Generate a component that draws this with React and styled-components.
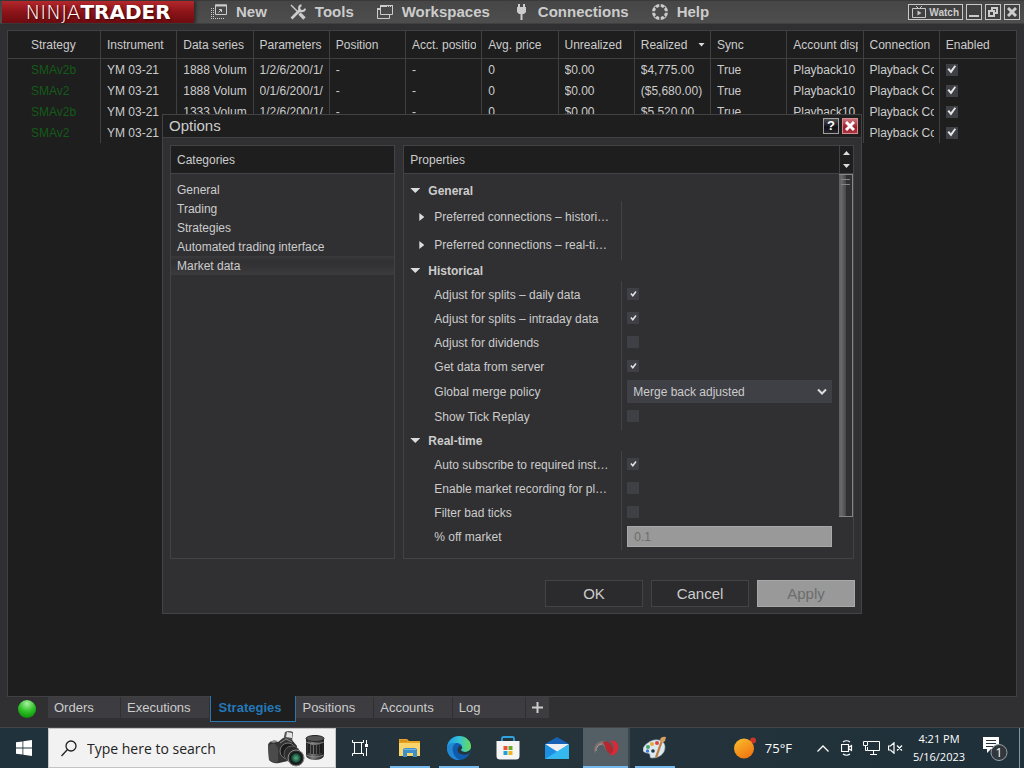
import React from 'react';
import styled, { createGlobalStyle, css } from 'styled-components';

const GlobalStyle = createGlobalStyle`
  * {
    box-sizing: border-box;
  }

  body {
    margin: 0;
    background: #303032;
    color: #cccccc;
    font-family: 'Liberation Sans', Arial, sans-serif;
    font-size: 12px;
  }

  button, input, select {
    font-family: inherit;
    font-size: inherit;
    color: inherit;
  }
`;

const Screen = styled.div`
  position: relative;
  display: flex;
  flex-direction: column;
  height: 100vh;
  overflow: hidden;
`;

/* ---------- title bar ---------- */

const TitleBar = styled.header`
  display: flex;
  align-items: center;
  height: 24px;
  padding-left: 2px;
  padding-right: 4px;
  background: linear-gradient(#464646, #4e4e4e);
  border-top: 1px solid #3a3a3a;
  border-bottom: 1px solid #404041;
`;

const Brand = styled.div`
  width: 192px;
  height: 22px;
  background: linear-gradient(#b3282d, #8c1418 50%, #6d0c10);
  box-shadow: 2px 0 3px #2a2a2a;
  color: #ffffff;
  font-family: 'DejaVu Sans', sans-serif;
  font-size: 20px;
  font-weight: 200;
  line-height: 22px;
  text-align: center;
  text-shadow: 1px 1px 2px #3c0508;
  white-space: nowrap;

  b {
    font-weight: 700;
  }
`;

const Menu = styled.nav`
  display: flex;
  gap: 23px;
  margin-left: 17px;
`;

const MenuButton = styled.button`
  display: flex;
  align-items: center;
  gap: 9px;
  padding: 0;
  border: 0;
  background: none;
  font-size: 15px;
  font-weight: bold;
  line-height: 22px;
`;

const WindowControls = styled.div`
  display: flex;
  gap: 3px;
  margin-left: auto;
`;

const FrameButton = styled.button`
  display: flex;
  align-items: center;
  justify-content: center;
  gap: 3px;
  min-width: 16px;
  height: 16px;
  padding: 0 ${({ $wide }) => ($wide ? '3px' : '0')};
  border: 1px solid #c8c8c8;
  background: #404040;
  font-size: 10px;
  font-weight: bold;
`;

/* ---------- strategies grid ---------- */

const GridPanel = styled.main`
  flex: 1;
  min-height: 0;
  margin: 6px 7px 0;
  border: 1px solid #404041;
  background: #1e1e1e;
`;

const Grid = styled.table`
  width: 100%;
  table-layout: fixed;
  border-spacing: 0;
`;

const cell = css`
  padding: 0 5px 0 6px;
  border-right: 1px solid #404041;
  text-align: left;
  font-weight: normal;

  &:first-child {
    width: 93px;
    padding-left: 23px;
  }

  &:last-child {
    border-right: 0;
  }
`;

const HeadCell = styled.th`
  ${cell}
  height: 28px;
  border-bottom: 1px solid #404041;
`;

const BodyCell = styled.td`
  ${cell}
  height: 21px;
  color: ${({ $green }) => ($green ? '#145a18' : '#cccccc')};
`;

const CellText = styled.div`
  display: flex;
  align-items: center;
  justify-content: space-between;
  overflow: hidden;
  white-space: nowrap;
`;

const CheckBox = styled.input.attrs({ type: 'checkbox' })`
  appearance: none;
  display: block;
  width: 12px;
  height: 12px;
  margin: 0;
  background: #3f3f46;

  &:checked::after {
    content: '';
    display: block;
    width: 12px;
    height: 12px;
    background: #e4e4e4;
    clip-path: ${({ $small }) =>
      $small
        ? 'polygon(25% 50%, 36% 42%, 44% 54%, 68% 25%, 77% 34%, 46% 75%)'
        : 'polygon(14% 48%, 28% 38%, 42% 56%, 74% 14%, 86% 22%, 44% 84%)'};
  }
`;

/* ---------- tabs ---------- */

const TabBar = styled.div`
  display: flex;
  align-items: flex-start;
  height: 31px;
  padding: 0 18px;
  border-bottom: 1px solid #454547;
`;

const StatusLight = styled.span`
  width: 18px;
  height: 18px;
  margin: 3px 12px 0 0;
  border-radius: 50%;
  background: radial-gradient(circle at 50% 20%, #a8f0a0, #33c42c 45%, #14a010 75%, #0b6e0b);
`;

const Tab = styled.button`
  min-width: ${({ $add }) => ($add ? '23px' : '72px')};
  height: 21px;
  margin-right: 1px;
  padding: 0 ${({ $add }) => ($add ? '0' : '18px 0 6px')};
  border: 0;
  background: #3c3c41;
  font-size: 13px;
  line-height: 21px;
  text-align: ${({ $add }) => ($add ? 'center' : 'left')};

  svg {
    display: block;
    margin: auto;
  }

  ${({ $active }) =>
    $active &&
    css`
      height: 26px;
      margin-top: -1px;
      margin-right: 0;
      padding: 0 14px 3px 8px;
      border: 1px solid #2b77b0;
      border-top: 0;
      background: #1e1e1e;
      color: #2478b8;
      font-weight: bold;
    `}
`;

/* ---------- options dialog ---------- */

const DialogLayer = styled.div`
  position: absolute;
  inset: 0;
  display: flex;
  align-items: flex-start;
  justify-content: center;
  padding-top: 114px;
  pointer-events: none;
`;

const Dialog = styled.section`
  width: 700px;
  border: 1px solid #434346;
  background: #303032;
  pointer-events: auto;
`;

const DialogTitle = styled.div`
  display: flex;
  align-items: center;
  gap: 3px;
  height: 23px;
  padding: 0 3px 0 6px;
  border-bottom: 1px solid #404041;
  background: #1e1e1e;

  h1 {
    flex: 1;
    margin: 0;
    font-size: 15px;
    font-weight: normal;
    line-height: 20px;
  }
`;

const CaptionButton = styled.button`
  display: flex;
  align-items: center;
  justify-content: center;
  width: 16px;
  height: 16px;
  padding: 0;
  border: 1px solid ${({ $danger }) => ($danger ? '#d98a90' : '#a0a0a0')};
  background: ${({ $danger }) =>
    $danger ? 'linear-gradient(#c9727a, #9c1f2b 60%, #a83540)' : 'linear-gradient(#4c4c50, #101018 60%, #26262a)'};
  color: #ffffff;
  font-size: 13px;
  font-weight: bold;
  line-height: 14px;
`;

const Panels = styled.div`
  display: grid;
  grid-template-columns: 1fr 2fr;
  gap: 8px;
  padding: 7px;
`;

const Panel = styled.div`
  display: flex;
  flex-direction: column;
  min-width: 0;
  border: 1px solid #434346;
`;

const PanelHead = styled.div`
  display: flex;
  align-items: center;
  justify-content: space-between;
  height: 28px;
  padding-left: 6px;
  border-bottom: 1px solid #434346;
  background: #1e1e1e;

  h2 {
    margin: 0;
    font-size: 12px;
    font-weight: normal;
  }
`;

const Categories = styled.div`
  display: flex;
  flex-direction: column;
  padding-top: 6px;
`;

const Category = styled.button`
  height: 19px;
  padding: 0 6px;
  border: 0;
  background: ${({ $selected }) => ($selected ? 'linear-gradient(#39393b, #303032 30%, #3b3b3d)' : 'none')};
  text-align: left;
`;

const ScrollArrows = styled.div`
  display: flex;
  flex-direction: column;
  align-items: center;
  justify-content: space-between;
  width: 14px;
  height: 27px;
  padding: 5px 0;
  border-left: 1px solid #434346;
`;

const Triangle = styled.span`
  flex: none;
  width: ${({ $w }) => $w}px;
  height: ${({ $h }) => $h}px;
  background: #dcdcdc;
  clip-path: ${({ $dir }) =>
    ({
      up: 'polygon(50% 0, 100% 100%, 0 100%)',
      down: 'polygon(0 0, 100% 0, 50% 100%)',
      right: 'polygon(0 0, 100% 50%, 0 100%)',
    })[$dir]};
`;

const PanelBody = styled.div`
  display: flex;
  height: 384px;
`;

const Groups = styled.div`
  flex: 1;
  min-width: 0;
  padding-top: 6px;
`;

const ScrollThumb = styled.div`
  width: 14px;
  height: 343px;
  padding-top: 4px;
  border: 1px solid #858585;
  border-left: 0;
  background: linear-gradient(90deg, #606060, #686868 20%, #4a4a4a 50%, #303032 52%);

  &::before {
    content: '';
    display: block;
    width: 9px;
    height: 4px;
    margin-left: 2px;
    border: 1px solid #858585;
    border-width: 1px 0;
  }
`;

const GroupTitle = styled.button`
  display: flex;
  align-items: center;
  gap: 8px;
  width: 100%;
  height: 21px;
  padding: 0 6px;
  border: 0;
  background: none;
  font-weight: bold;
`;

const GroupRows = styled.div`
  padding: 1px 0 2px;
  background: linear-gradient(#434346, #434346) 217px 0 / 1px 100% no-repeat;
`;

const Row = styled.div`
  display: grid;
  grid-template-columns: 217px 1fr;
  align-items: center;
  height: ${({ $height }) => $height || 24}px;
`;

const RowLabel = styled.label`
  display: flex;
  align-items: center;
  gap: ${({ $nested }) => ($nested ? '10px' : '0')};
  padding-top: 2px;
  padding-left: ${({ $nested }) => ($nested ? '15px' : '30px')};
  white-space: nowrap;
`;

const RowValue = styled.div`
  padding: 0 7px 0 6px;
`;

const SelectWrap = styled.div`
  position: relative;

  svg {
    position: absolute;
    top: 8px;
    right: 5px;
    pointer-events: none;
  }
`;

const Select = styled.select`
  appearance: none;
  display: block;
  width: 100%;
  height: 23px;
  padding: 1px 6px 0;
  border: 0;
  border-radius: 0;
  background: #3f3f46;
`;

const TextBox = styled.input`
  display: block;
  width: 100%;
  height: 21px;
  padding: 1px 6px 0;
  border: 1px solid #a8a8a8;
  background: #999999;
  color: #6c6c6c;
`;

const DialogButtons = styled.div`
  display: flex;
  justify-content: flex-end;
  gap: 8px;
  padding: 14px 6px 6px;
`;

const DialogButton = styled.button`
  width: 98px;
  height: 27px;
  padding: 0;
  border: 1px solid #434346;
  background: #2b2b2d;
  font-size: 15px;

  &:disabled {
    border-color: #a8a8a8;
    background: #999999;
    color: #6c6c6c;
  }
`;

/* ---------- taskbar ---------- */

const Taskbar = styled.footer`
  display: flex;
  height: 40px;
  background: linear-gradient(90deg, #20323c, #26343b 50%, #1f303a);
  color: #ffffff;
  font-family: 'Open Sans', 'Noto Sans', sans-serif;
`;

const TaskButton = styled.button`
  display: flex;
  align-items: center;
  justify-content: center;
  width: ${({ $width }) => $width || 49}px;
  padding: 0;
  border: 0;
  background: none;

  svg {
    flex: none;
  }

  ${({ $running }) =>
    $running &&
    css`
      background: linear-gradient(#76b9ed, #76b9ed) 50% 100% / 40px 2px no-repeat;
    `}

  ${({ $current }) =>
    $current &&
    css`
      background: linear-gradient(#76b9ed, #76b9ed) 50% 100% / 45px 2px no-repeat,
        linear-gradient(90deg, transparent 2px, #535e65 2px 47px, #3b474e 47px);
    `}
`;

const Search = styled.label`
  display: flex;
  align-items: center;
  width: 288px;
  padding: 0 10px 0 12px;
  border: 1px solid #c4c4c4;
  background: #f2f2f2;

  input {
    flex: 1;
    min-width: 0;
    margin-left: 10px;
    padding: 0;
    border: 0;
    outline: 0;
    background: none;
    color: #222222;
    font-size: 14px;
  }

  input::placeholder {
    color: #222222;
    opacity: 1;
  }
`;

const Tray = styled.div`
  display: flex;
  margin-left: auto;
`;

const Weather = styled.button`
  display: flex;
  align-items: center;
  gap: 8px;
  margin-right: 19px;
  padding: 0;
  border: 0;
  background: none;
  font-size: 13px;
`;

const Clock = styled.button`
  width: 64px;
  padding: 0;
  border: 0;
  background: none;
  font-size: 11px;
  line-height: 18px;
`;

const ShowDesktop = styled.button`
  width: 5px;
  padding: 0;
  border: 0;
  border-left: 1px solid #8b969c;
  background: none;
`;

/* ---------- icons ---------- */

const NewIcon = () => (
  <svg width="16" height="16" viewBox="0 0 16 16" fill="none" stroke="#ccc">
    <path d="M4.5 1h11v9.500h-11z" />
    <path d="M4 1.500h12" strokeWidth="2" />
    <path d="M.5 4v12M0 14.500h13M2.500 4v9" strokeDasharray="1 1" />
    <path d="M7.500 8.500l3-3M8 5.500h2.500v2.500" />
  </svg>
);

const ToolsIcon = () => (
  <svg width="16" height="16" viewBox="0 0 16 16" fill="none" stroke="#ccc">
    <path d="M1 1l8 8" strokeWidth="1.500" />
    <path d="M9.500 9.500l5 5" strokeWidth="3.200" />
    <path d="M1.500 14.500l9-9" strokeWidth="2.600" />
    <path d="M11.500 1.200a3 3 0 1 0 3.600 3.500" strokeWidth="2.200" />
  </svg>
);

const WorkspacesIcon = () => (
  <svg width="16" height="16" viewBox="0 0 16 16" fill="none" stroke="#ccc">
    <path d="M3.500 1.500h12v9h-12z" />
    <path d="M3 2h13" strokeWidth="2" />
    <path d="M10 2.500h5" stroke="#555" strokeDasharray="1 1" />
    <path d="M3 5.500H.5v9h12v-4" />
    <path d="M0 5h3" strokeWidth="2" />
  </svg>
);

const PlugIcon = () => (
  <svg width="16" height="16" viewBox="0 0 16 16" fill="#ccc">
    <path d="M5 0h2v3h3V0h2v3h1v5l-2 2H9.500v6h-2v-6H6L4 8V3h1z" />
  </svg>
);

const HelpIcon = () => (
  <svg width="16" height="16" viewBox="0 0 16 16" fill="none" stroke="#ccc">
    <circle cx="8" cy="8" r="6.500" strokeWidth="3" />
    <path d="M8 0v4M8 12v4M0 8h4M12 8h4M3 3l2 2M11 11l2 2M13 3l-2 2M3 13l2-2" stroke="#4a4a4a" strokeWidth="1.500" />
  </svg>
);

const TvIcon = () => (
  <svg width="14" height="12" viewBox="0 0 14 12" fill="none" stroke="#c8c8c8">
    <path d="M.5 2.500h13v9H.5zM4 0l2 2M10 0L8 2" />
    <path d="M5.500 4.500v5l4-2.500z" fill="#c8c8c8" stroke="none" />
  </svg>
);

const RestoreIcon = () => (
  <svg width="10" height="10" viewBox="0 0 10 10" fill="none" stroke="#ccc" strokeWidth="2">
    <path d="M4 6V1h5v5H4z" />
    <path d="M1 4h5v5H1z" fill="#404040" />
  </svg>
);

const CloseIcon = ({ color = '#ccc' }) => (
  <svg width="10" height="10" viewBox="0 0 10 10" stroke={color} strokeWidth="3">
    <path d="M1 1l8 8M9 1L1 9" />
  </svg>
);

const WindowsLogo = () => (
  <svg width="16" height="16" viewBox="0 0 16 16" fill="#fff">
    <path d="M0 2.300l6.500-.9v6.200H0zM7.300 1.300L16 0v7.600H7.300zM0 8.400h6.500v6.200L0 13.700zM7.300 8.400H16V16l-8.700-1.300z" />
  </svg>
);

const SearchIcon = () => (
  <svg width="16" height="17" viewBox="0 0 16 17" fill="none" stroke="#222" strokeWidth="1.300">
    <circle cx="10" cy="6" r="5" />
    <path d="M6.500 9.500L.5 16" />
  </svg>
);

const CameraArt = () => (
  <svg width="58" height="37" viewBox="0 0 58 37">
    <defs>
      <linearGradient id="lensBody" x1="0" x2="1">
        <stop offset="0" stopColor="#222" />
        <stop offset=".35" stopColor="#777" />
        <stop offset="1" stopColor="#1c1c1c" />
      </linearGradient>
      <radialGradient id="glass">
        <stop offset="0" stopColor="#58b184" />
        <stop offset="1" stopColor="#0e3a2a" />
      </radialGradient>
    </defs>
    <path d="M16 11l2-9q4-2 8 0l-1 10z" fill="#555" />
    <path d="M19 7l1-5 5 1v5z" fill="#e4e4e4" />
    <path d="M1 15q1-4 6-4l4 1 5-4 9 2 5 6v13L12 33q-6 1-10-3z" fill="#343434" />
    <path d="M1 16q3-3 7-2l3 4v14q-5 1-9-2z" fill="#4b4b4b" />
    <path d="M3 12l4-2 4 1-4 2z" fill="#8a8a8a" />
    <path d="M13 13l6-4 6 3" fill="none" stroke="#8a8a8a" />
    <path d="M16 17l10-4 10 12-8 10z" fill="#2a2a2a" />
    <circle cx="21" cy="21" r="8" fill="#1b1b1b" stroke="#777" />
    <circle cx="25" cy="24" r="8" fill="#2d2d2d" stroke="#5e5e5e" />
    <circle cx="29" cy="28" r="8" fill="#2a2a2a" stroke="#909090" />
    <circle cx="29" cy="28" r="6" fill="#111" />
    <circle cx="29" cy="28" r="5" fill="url(#glass)" />
    <path d="M39 9q9-5 18 0v17q-2 4-9 4t-9-4z" fill="url(#lensBody)" />
    <ellipse cx="48" cy="8.500" rx="9" ry="3" fill="#555" stroke="#222" />
    <path d="M42 14v9M45 15v9M48 15v9M51 15v9M54 14v9" stroke="#151515" strokeWidth="1.500" />
    <path d="M39 12q9 4 18 0M39 25q9 4 18 0" fill="none" stroke="#999" strokeWidth=".7" />
  </svg>
);

const TaskViewIcon = () => (
  <svg width="17" height="16" viewBox="0 0 17 16" fill="none" stroke="#fff">
    <path d="M.5 0v2.500h11V0M.5 16v-2.500h11V16M2.500 2.500v11M9.500 2.500v11M14.500 0v4M14.500 8v8" />
    <path d="M13 4h3v3h-3z" fill="#fff" stroke="none" />
  </svg>
);

const ExplorerIcon = () => (
  <svg width="22" height="20" viewBox="0 0 22 20">
    <path d="M0 1h8l2 2h11v15H0z" fill="#e8a524" />
    <path d="M0 5h21v13H0z" fill="#fbd56b" />
    <path d="M1 2h7v2H1z" fill="#d8931c" />
    <path d="M4 19v-8l2-1h10l2 1v8h-4v-4H8v4z" fill="#3d90c9" />
    <path d="M5 11h12v1H5z" fill="#71b7e3" />
  </svg>
);

const EdgeIcon = () => (
  <svg width="24" height="24" viewBox="0 0 24 24">
    <defs>
      <linearGradient id="edgeTop" x1="0" x2="1">
        <stop offset="0" stopColor="#1b9de2" />
        <stop offset=".5" stopColor="#35c1d6" />
        <stop offset="1" stopColor="#68dc54" />
      </linearGradient>
    </defs>
    <circle cx="12" cy="12" r="12" fill="#0f5cae" />
    <path d="M0 11C1 4 6 0 12 0c7 0 12 5 12 10 0 4-3 6-6 6-2 0-4-1-4-2 0-1 1-1 1-3 0-3-3-4-6-4-5 0-8 3-9 4z" fill="url(#edgeTop)" />
    <path d="M0 11c2-4 6-4 9-4-3 2-4 5-3 9 1 4 4 7 7 8C5 25-1 18 0 11z" fill="#2387d4" />
    <path d="M14 14c0 1 2 2 4 2 2.500 0 4-1 6-3-.5 2-1 3.500-2 4.500-3 2-9 1.500-11-1.500-1-2-.5-4 1-5.500 1-1 3 0 3.300 1 0 1-1.300 1.500-1.300 2.500z" fill="#26343b" />
  </svg>
);

const StoreIcon = () => (
  <svg width="24" height="24" viewBox="0 0 24 24">
    <path d="M6 7V2.500Q6 1 7.500 1h9Q18 1 18 2.500V7" fill="none" stroke="#2ea3e0" strokeWidth="1.800" />
    <path d="M.5 5h23v15q0 3.500-3.500 3.500H4Q.5 23.500.5 20z" fill="#f5f5f5" />
    <path d="M7.500 10h4v4h-4z" fill="#e4572e" />
    <path d="M12.500 10h4v4h-4z" fill="#6ba72b" />
    <path d="M7.500 15h4v4h-4z" fill="#259fd8" />
    <path d="M12.500 15h4v4h-4z" fill="#f0b41c" />
  </svg>
);

const MailIcon = () => (
  <svg width="24" height="22" viewBox="0 0 24 22">
    <path d="M0 7l12-7 12 7v15H0z" fill="#1762b5" />
    <path d="M0 7h24L12 16z" fill="#f0f0f0" />
    <path d="M0 7l24 15H0z" fill="#1c8fe3" />
    <path d="M0 22L24 7v15z" fill="#35b8ef" />
  </svg>
);

const NinjaIcon = () => (
  <svg width="26" height="20" viewBox="0 0 26 20">
    <path d="M3 16C-1 12 2 4 9 3c3 0 5 2 6 5l-2 5c-1-4-3-7-6-6-4 1-5 5-4 9z" fill="#82706f" />
    <path d="M10 4c5-2 8 2 10 6 1 3 2 4 4 3-2 4-7 4-10 0-2-3-2-6-4-9z" fill="#b5262f" />
    <path d="M17 3c6-2 10 4 8 9-1 4-5 6-9 5 5-2 7-9 1-14z" fill="#d12d3a" />
    <path d="M3 13c0-4 3-7 6-7" fill="none" stroke="#b3a19d" />
  </svg>
);

const PaintIcon = () => (
  <svg width="24" height="24" viewBox="0 0 24 24">
    <path d="M8 5c7-3 14 0 14 6 0 7-6 11-13 11-2 0-2-1-2-3 0-3-7-1-7-5 0-4 4-7 8-9z" fill="#dce9f2" stroke="#8fa8b8" strokeWidth=".6" />
    <circle cx="5" cy="11" r="2" fill="#4aa564" />
    <circle cx="9" cy="8" r="2" fill="#e6a93c" />
    <circle cx="14" cy="7" r="2" fill="#d9473b" />
    <circle cx="4.500" cy="15" r="1.700" fill="#3d7bd1" />
    <circle cx="10" cy="15" r="1.800" fill="#26343b" />
    <path d="M12 21l2 1 6-17-2-1z" fill="#c07f3c" />
    <path d="M17 3q2-3 6-2l-1 4-3 2z" fill="#d9a05f" />
  </svg>
);

const SunIcon = () => (
  <svg width="23" height="23" viewBox="0 0 23 23">
    <defs>
      <linearGradient id="sun" x1="0" y1="0" x2=".6" y2="1">
        <stop offset="0" stopColor="#fbc02d" />
        <stop offset="1" stopColor="#f07812" />
      </linearGradient>
    </defs>
    <circle cx="19" cy="3.500" r="3" fill="#c8362b" />
    <circle cx="10" cy="11.500" r="10" fill="url(#sun)" />
  </svg>
);

const ChevronUp = () => (
  <svg width="12" height="7" viewBox="0 0 12 7" fill="none" stroke="#fff" strokeWidth="1.300">
    <path d="M.5 6.500L6 1l5.500 5.500" />
  </svg>
);

const MeetIcon = () => (
  <svg width="12" height="16" viewBox="0 0 12 16" fill="none" stroke="#fff" strokeWidth="1.200">
    <path d="M.5 4.500h7v7h-7zM7.500 7.500l3-2v5l-3-2M2 2q3.500-2.500 7 0M2 14q3.500 2.500 7 0" />
  </svg>
);

const NetworkIcon = () => (
  <svg width="17" height="14" viewBox="0 0 17 14" fill="none" stroke="#fff">
    <path d="M5 .5h11.500v9h-12V6M10.500 9.500v4M7 13.500h7M2.500 6v3.500h2" />
    <path d="M.5 .5h4v4h-4zM2.500 4v3" />
  </svg>
);

const MutedIcon = () => (
  <svg width="15" height="12" viewBox="0 0 15 12" fill="none" stroke="#fff" strokeWidth="1.200">
    <path d="M.5 4h2L6 .8v10.400L2.500 8h-2zM9 3.500l5 5M14 3.500l-5 5" />
  </svg>
);

const NoticeIcon = () => (
  <svg width="25" height="25" viewBox="0 0 25 25">
    <path d="M0 1h16v12H8l-4 4v-4H0z" fill="#fff" />
    <path d="M3 4.500h10M3 7.500h10M3 10.500h7" stroke="#26343b" />
    <circle cx="16" cy="16.500" r="8" fill="#30383d" stroke="#9aa1a5" />
    <text x="16" y="21" fill="#fff" fontSize="12" textAnchor="middle">1</text>
  </svg>
);

/* ---------- data ---------- */

const menu = [
  ['New', NewIcon],
  ['Tools', ToolsIcon],
  ['Workspaces', WorkspacesIcon],
  ['Connections', PlugIcon],
  ['Help', HelpIcon],
];

const columns = [
  'Strategy', 'Instrument', 'Data series', 'Parameters', 'Position', 'Acct. positio', 'Avg. price',
  'Unrealized', 'Realized', 'Sync', 'Account disp', 'Connection', 'Enabled',
];

const strategies = [
  ['SMAv2b', '1888 Volum', '1/2/6/200/1/', '$4,775.00'],
  ['SMAv2', '1888 Volum', '0/1/6/200/1/', '($5,680.00)'],
  ['SMAv2b', '1333 Volum', '1/2/6/200/1/', '$5,520.00'],
  ['SMAv2', '1333 Volum', '0/1/6/200/1/', '$0.00'],
].map(([name, series, params, realized]) => [
  name, 'YM 03-21', series, params, '-', '-', '0', '$0.00', realized, 'True', 'Playback10', 'Playback Co',
]);

const categories = ['General', 'Trading', 'Strategies', 'Automated trading interface', 'Market data'];

const groups = [
  {
    title: 'General',
    rows: [
      { label: 'Preferred connections – histori…', type: 'nested', height: 28 },
      { label: 'Preferred connections – real-ti…', type: 'nested', height: 28 },
    ],
  },
  {
    title: 'Historical',
    rows: [
      { label: 'Adjust for splits – daily data', type: 'check', value: true },
      { label: 'Adjust for splits – intraday data', type: 'check', value: true },
      { label: 'Adjust for dividends', type: 'check', value: false },
      { label: 'Get data from server', type: 'check', value: true },
      { label: 'Global merge policy', type: 'select', value: 'Merge back adjusted', height: 26 },
      { label: 'Show Tick Replay', type: 'check', value: false },
    ],
  },
  {
    title: 'Real-time',
    rows: [
      { label: 'Auto subscribe to required inst…', type: 'check', value: true },
      { label: 'Enable market recording for pl…', type: 'check', value: false },
      { label: 'Filter bad ticks', type: 'check', value: false },
      { label: '% off market', type: 'text', value: '0.1' },
    ],
  },
];

const tabs = ['Orders', 'Executions', 'Strategies', 'Positions', 'Accounts', 'Log'];

/* ---------- components ---------- */

const PropertyRow = ({ row }) => {
  const id = row.label.replace(/\W+/g, '-').toLowerCase();
  const nested = row.type === 'nested';

  return (
    <Row $height={row.height}>
      <RowLabel as={nested ? 'div' : 'label'} htmlFor={nested ? undefined : id} $nested={nested}>
        {nested && <Triangle $dir="right" $w={5} $h={8} />}
        <span>{row.label}</span>
      </RowLabel>
      <RowValue>
        {row.type === 'check' && <CheckBox id={id} $small defaultChecked={row.value} />}
        {row.type === 'text' && <TextBox id={id} defaultValue={row.value} disabled />}
        {row.type === 'select' && (
          <SelectWrap>
            <Select id={id} defaultValue={row.value}>
              <option>{row.value}</option>
            </Select>
            <svg width="10" height="8" viewBox="0 0 10 8" fill="none" stroke="#ddd" strokeWidth="2">
              <path d="M1 1.500l4 4 4-4" />
            </svg>
          </SelectWrap>
        )}
      </RowValue>
    </Row>
  );
};

const OptionsDialog = () => (
  <DialogLayer>
    <Dialog role="dialog" aria-labelledby="options-title">
      <DialogTitle>
        <h1 id="options-title">Options</h1>
        <CaptionButton>?</CaptionButton>
        <CaptionButton $danger aria-label="Close">
          <CloseIcon color="#fff" />
        </CaptionButton>
      </DialogTitle>
      <Panels>
        <Panel>
          <PanelHead>
            <h2>Categories</h2>
          </PanelHead>
          <Categories>
            {categories.map((name) => (
              <Category key={name} $selected={name === 'Market data'}>{name}</Category>
            ))}
          </Categories>
        </Panel>
        <Panel>
          <PanelHead>
            <h2>Properties</h2>
            <ScrollArrows>
              <Triangle $dir="up" $w={7} $h={4} />
              <Triangle $dir="down" $w={7} $h={4} />
            </ScrollArrows>
          </PanelHead>
          <PanelBody>
            <Groups>
              {groups.map((group) => (
                <div key={group.title}>
                  <GroupTitle>
                    <Triangle $dir="down" $w={10} $h={5} />
                    {group.title}
                  </GroupTitle>
                  <GroupRows>
                    {group.rows.map((row) => (
                      <PropertyRow key={row.label} row={row} />
                    ))}
                  </GroupRows>
                </div>
              ))}
            </Groups>
            <ScrollThumb />
          </PanelBody>
        </Panel>
      </Panels>
      <DialogButtons>
        <DialogButton>OK</DialogButton>
        <DialogButton>Cancel</DialogButton>
        <DialogButton disabled>Apply</DialogButton>
      </DialogButtons>
    </Dialog>
  </DialogLayer>
);

const StrategyGrid = () => (
  <GridPanel>
    <Grid>
      <thead>
        <tr>
          {columns.map((name) => (
            <HeadCell key={name}>
              <CellText>
                {name}
                {name === 'Realized' && <Triangle $dir="down" $w={7} $h={4} />}
              </CellText>
            </HeadCell>
          ))}
        </tr>
      </thead>
      <tbody>
        {strategies.map((row, i) => (
          <tr key={i}>
            {row.map((value, j) => (
              <BodyCell key={columns[j]} $green={j === 0}>
                <CellText>{value}</CellText>
              </BodyCell>
            ))}
            <BodyCell>
              <CheckBox defaultChecked aria-label="Enabled" />
            </BodyCell>
          </tr>
        ))}
      </tbody>
    </Grid>
  </GridPanel>
);

const App = () => {
  return (
    <>
      <GlobalStyle />
      <Screen>
        <TitleBar>
          <Brand>NINJA<b>TRADER</b></Brand>
          <Menu>
            {menu.map(([name, Icon]) => (
              <MenuButton key={name}>
                <Icon />
                {name}
              </MenuButton>
            ))}
          </Menu>
          <WindowControls>
            <FrameButton $wide><TvIcon />Watch</FrameButton>
            <FrameButton aria-label="Minimize">
              <svg width="10" height="10" viewBox="0 0 10 10"><path d="M0 8h10v2H0z" fill="#ccc" /></svg>
            </FrameButton>
            <FrameButton aria-label="Restore"><RestoreIcon /></FrameButton>
            <FrameButton aria-label="Close"><CloseIcon /></FrameButton>
          </WindowControls>
        </TitleBar>

        <StrategyGrid />

        <TabBar>
          <StatusLight />
          {tabs.map((name) => (
            <Tab key={name} $active={name === 'Strategies'}>{name}</Tab>
          ))}
          <Tab $add aria-label="Add tab">
            <svg width="11" height="11" viewBox="0 0 11 11"><path d="M5.500 0v11M0 5.500h11" stroke="#ccc" strokeWidth="2" /></svg>
          </Tab>
        </TabBar>

        <Taskbar>
          <TaskButton $width={48} aria-label="Start"><WindowsLogo /></TaskButton>
          <Search>
            <SearchIcon />
            <input type="text" placeholder="Type here to search" />
            <CameraArt />
          </Search>
          <TaskButton aria-label="Task view"><TaskViewIcon /></TaskButton>
          <TaskButton $running aria-label="File Explorer"><ExplorerIcon /></TaskButton>
          <TaskButton $running aria-label="Edge"><EdgeIcon /></TaskButton>
          <TaskButton aria-label="Store"><StoreIcon /></TaskButton>
          <TaskButton aria-label="Mail"><MailIcon /></TaskButton>
          <TaskButton $current aria-label="NinjaTrader"><NinjaIcon /></TaskButton>
          <TaskButton $running aria-label="Paint"><PaintIcon /></TaskButton>
          <Tray>
            <Weather><SunIcon />75°F</Weather>
            <TaskButton $width={24} aria-label="Hidden icons"><ChevronUp /></TaskButton>
            <TaskButton $width={24} aria-label="Meet"><MeetIcon /></TaskButton>
            <TaskButton $width={24} aria-label="Network"><NetworkIcon /></TaskButton>
            <TaskButton $width={24} aria-label="Volume"><MutedIcon /></TaskButton>
            <Clock>4:21 PM<br />5/16/2023</Clock>
            <TaskButton $width={48} aria-label="Notifications"><NoticeIcon /></TaskButton>
            <ShowDesktop aria-label="Show desktop" />
          </Tray>
        </Taskbar>

        <OptionsDialog />
      </Screen>
    </>
  );
};

export default App;
